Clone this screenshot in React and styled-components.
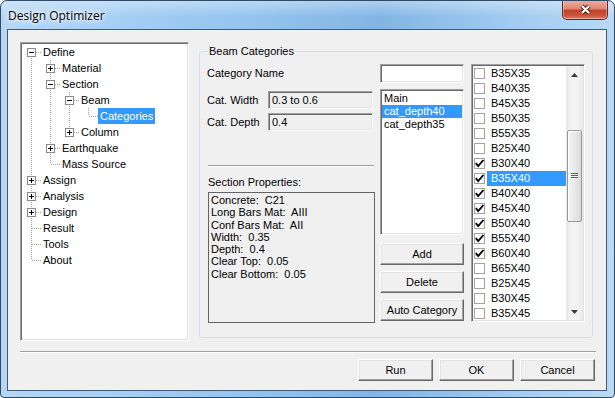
import React from "react";
import styled, { createGlobalStyle } from "styled-components";

const GlobalStyle = createGlobalStyle`
  html, body { margin: 0; padding: 0; background: #fff; }
  body {
    font-family: "Liberation Sans", Arial, sans-serif;
    font-size: 11px;
    color: #000;
  }
  #root { width: 615px; height: 398px; }
`;

const Window = styled.div`
  box-sizing: border-box;
  width: 615px;
  height: 398px;
  border: 1px solid #2f4a66;
  border-radius: 7px 7px 4px 4px;
  background:
    linear-gradient(180deg, rgba(255,255,255,0.35) 0%, rgba(255,255,255,0) 16px),
    linear-gradient(90deg, #b6d6f3 0%, #a6cff3 18%, #94c4ef 40%, #83b5e4 62%, #9cc8ef 80%, #bad9f4 100%);
  display: flex;
  flex-direction: column;
  overflow: hidden;
`;

const TitleBar = styled.div`
  height: 28px;
  flex: none;
  display: flex;
  align-items: flex-start;
  padding: 0 6px 0 7px;
`;

const Title = styled.div`
  flex: 1;
  margin-top: 7px;
  font-family: "Open Sans", "Noto Sans", sans-serif;
  font-size: 12px;
  line-height: 16px;
  color: #000;
  text-shadow: 0 0 6px #fff, 0 0 10px #fff, 0 0 3px rgba(255,255,255,0.9);
`;

const CloseButton = styled.div`
  box-sizing: border-box;
  width: 46px;
  height: 20px;
  margin-top: -1px;
  border: 1px solid #6b2a20;
  border-top: none;
  border-radius: 0 0 5px 5px;
  background: linear-gradient(180deg, #eab0a4 0%, #dc8877 45%, #c2432c 55%, #c9503a 80%, #df7f69 100%);
  box-shadow: inset 0 0 0 1px rgba(255,255,255,0.35);
  display: flex;
  align-items: center;
  justify-content: center;
`;

const Client = styled.div`
  flex: 1;
  margin: 0 7px 6px 6px;
  border: 1px solid #3b5d80;
  background: #f0f0f0;
  display: flex;
  flex-direction: column;
  padding: 12px 10px 0 12px;
`;

const TopRow = styled.div`
  display: flex;
  align-items: flex-start;
  gap: 10px;
  height: 299px;
`;

const sunken = `
  box-sizing: border-box;
  border: 1px solid;
  border-color: #a0a0a0 #fff #fff #a0a0a0;
  box-shadow: inset 1px 1px 0 #696969, inset -1px -1px 0 #e3e3e3;
  padding: 1px;
`;

const TreePanel = styled.div`
  ${sunken}
  width: 169px;
  height: 299px;
  background: #fff;
`;

const TreeRow = styled.div`
  display: flex;
  height: 16px;
`;

const Guide = styled.svg`
  display: block;
  flex: none;
`;

const TreeLabel = styled.span`
  padding: 0 2px;
  height: 16px;
  line-height: 16px;
  white-space: nowrap;
  background: ${(p) => (p.$selected ? "#3399ff" : "transparent")};
  color: ${(p) => (p.$selected ? "#fff" : "#000")};
`;

const GroupBox = styled.div`
  position: relative;
  box-sizing: border-box;
  width: 394px;
  height: 287px;
  margin-top: 9px;
  border: 1px solid #d5dfe5;
  border-radius: 3px;
  padding: 12px 7px 0 7px;
  display: flex;
  gap: 5px;
`;

const Legend = styled.div`
  position: absolute;
  top: -7px;
  left: 8px;
  padding: 0 1px;
  line-height: 13px;
  background: #f0f0f0;
`;

const Column = styled.div`
  flex: none;
  width: ${(p) => p.$w}px;
  margin-left: ${(p) => p.$ml || 0}px;
  display: flex;
  flex-direction: column;
`;

const PlainLabel = styled.div`
  height: ${(p) => p.$h || 13}px;
  line-height: ${(p) => p.$h || 13}px;
  margin-top: ${(p) => p.$mt || 0}px;
  margin-left: ${(p) => p.$ml || 0}px;
`;

const FieldRow = styled.div`
  display: flex;
  align-items: center;
  margin-top: ${(p) => p.$mt}px;
`;

const FieldLabel = styled.div`
  width: 61px;
`;

const ReadOnlyBox = styled.div`
  ${sunken}
  width: 105px;
  height: 18px;
  padding: 0 0 0 3px;
  line-height: 16px;
  background: #f0f0f0;
`;

const Etched = styled.div`
  width: ${(p) => p.$w}px;
  margin-top: ${(p) => p.$mt}px;
  margin-left: ${(p) => p.$ml || 0}px;
  border-top: 1px solid #a0a0a0;
  border-bottom: 1px solid #fff;
`;

const PropsBox = styled.div`
  box-sizing: border-box;
  width: 167px;
  height: 131px;
  margin: 3px 0 0 1px;
  border: 1px solid #646464;
  padding: 1px 2px;
  line-height: 12.3px;
  white-space: pre;
`;

const TextInput = styled.div`
  ${sunken}
  width: 84px;
  height: 19px;
  background: #fff;
`;

const ListBox = styled.div`
  ${sunken}
  width: 84px;
  height: 146px;
  margin-top: 6px;
  padding: 2px 1px 1px 1px;
  background: #fff;
`;

const ListItem = styled.div`
  height: 13px;
  line-height: 13px;
  padding-left: 2px;
  white-space: nowrap;
  background: ${(p) => (p.$selected ? "#3399ff" : "transparent")};
  color: ${(p) => (p.$selected ? "#fff" : "#000")};
`;

const Button = styled.div`
  box-sizing: border-box;
  width: ${(p) => p.$w || 84}px;
  height: 22px;
  margin-top: ${(p) => p.$mt || 0}px;
  border: 1px solid;
  border-color: #fff #696969 #696969 #fff;
  box-shadow: inset -1px -1px 0 #a0a0a0, inset 1px 1px 0 #e3e3e3;
  background: #f0f0f0;
  display: flex;
  align-items: center;
  justify-content: center;
  line-height: 13px;
`;

const CheckedList = styled.div`
  ${sunken}
  width: 114px;
  height: 258px;
  background: #fff;
  display: flex;
  overflow: hidden;
`;

const CheckItems = styled.div`
  flex: 1;
  overflow: hidden;
`;

const CheckRow = styled.div`
  height: 15px;
  display: flex;
  align-items: center;
`;

const CheckBoxIcon = styled.svg`
  display: block;
  flex: none;
  margin-left: 1px;
`;

const CheckLabel = styled.div`
  flex: 1;
  margin-left: 2px;
  padding-left: 4px;
  height: 15px;
  line-height: 15px;
  background: ${(p) => (p.$selected ? "#3399ff" : "transparent")};
  color: ${(p) => (p.$selected ? "#fff" : "#000")};
`;

const ScrollBar = styled.div`
  width: 17px;
  flex: none;
  display: flex;
  flex-direction: column;
  background: linear-gradient(90deg, #e6e6e6 0%, #f3f3f3 30%, #f3f3f3 70%, #e8e8e8 100%);
`;

const ArrowBtn = styled.div`
  height: 17px;
  flex: none;
  display: flex;
  align-items: center;
  justify-content: center;
`;

const Track = styled.div`
  flex: 1;
  display: flex;
  flex-direction: column;
`;

const Thumb = styled.div`
  box-sizing: border-box;
  height: ${(p) => p.$h}px;
  margin: ${(p) => p.$top}px 1px 0 1px;
  border: 1px solid #979797;
  border-radius: 2px;
  background: linear-gradient(90deg, #f4f4f4 0%, #e9e9e9 50%, #d9d9d9 100%);
  box-shadow: inset 1px 1px 0 #fff;
  display: flex;
  align-items: center;
  justify-content: center;
`;

const Grip = styled.div`
  width: 7px;
  height: 6px;
  margin-top: -1px;
  background: repeating-linear-gradient(180deg, #5e5e5e 0, #5e5e5e 1px, #f6f6f6 1px, #f6f6f6 2px);
`;

const BottomRule = styled.div`
  margin-top: 10px;
  border-top: 1px solid #a0a0a0;
  border-bottom: 1px solid #fff;
`;

const ButtonRow = styled.div`
  display: flex;
  justify-content: flex-end;
  gap: 6px;
  margin-top: 6px;
  padding-right: 1px;
`;

const treeData = [
  {
    label: "Define",
    open: true,
    children: [
      { label: "Material", children: [{ label: "x" }] },
      {
        label: "Section",
        open: true,
        children: [
          { label: "Beam", open: true, children: [{ label: "Categories", selected: true }] },
          { label: "Column", children: [{ label: "x" }] },
        ],
      },
      { label: "Earthquake", children: [{ label: "x" }] },
      { label: "Mass Source" },
    ],
  },
  { label: "Assign", children: [{ label: "x" }] },
  { label: "Analysis", children: [{ label: "x" }] },
  { label: "Design", children: [{ label: "x" }] },
  { label: "Result" },
  { label: "Tools" },
  { label: "About" },
];

function flatten(nodes, level, ancestors, out) {
  nodes.forEach((n, i) => {
    const last = i === nodes.length - 1;
    out.push({ ...n, level, last, first: level === 0 && i === 0, ancestors });
    if (n.children && n.open) flatten(n.children, level + 1, [...ancestors, !last], out);
  });
  return out;
}

const dot = { stroke: "#a0a0a0", strokeWidth: 1, strokeDasharray: "1 1" };

function GuideCell({ through, node }) {
  return (
    <Guide width="19" height="16" viewBox="0 0 19 16">
      {through && <line x1="9.5" y1="0" x2="9.5" y2="16" {...dot} />}
      {node && (
        <>
          {!node.first && <line x1="9.5" y1="0" x2="9.5" y2="8" {...dot} />}
          {!node.last && <line x1="9.5" y1="8" x2="9.5" y2="16" {...dot} />}
          <line x1="10" y1="8.5" x2="19" y2="8.5" {...dot} />
          {node.children && (
            <>
              <rect x="5.5" y="4.5" width="8" height="8" fill="#fff" stroke="#8a8a8a" />
              <line x1="7" y1="8.5" x2="12" y2="8.5" stroke="#000" />
              {!node.open && <line x1="9.5" y1="6" x2="9.5" y2="11" stroke="#000" />}
            </>
          )}
        </>
      )}
    </Guide>
  );
}

function Tree() {
  const rows = flatten(treeData, 0, [], []);
  return (
    <TreePanel>
      {rows.map((r, i) => (
        <TreeRow key={i}>
          {r.ancestors.map((a, c) => (
            <GuideCell key={c} through={a} />
          ))}
          <GuideCell node={r} />
          <TreeLabel $selected={r.selected}>{r.label}</TreeLabel>
        </TreeRow>
      ))}
    </TreePanel>
  );
}

function CheckBox({ checked }) {
  return (
    <CheckBoxIcon width="11" height="11" viewBox="0 0 11 11">
      <rect x="0.5" y="0.5" width="10" height="10" fill="#fff" stroke="#a3a3a3" />
      {checked && (
        <path d="M1.8 5.2 L4.2 8 L9.4 2" fill="none" stroke="#000" strokeWidth="1.9" />
      )}
    </CheckBoxIcon>
  );
}

const sections = [
  { name: "B35X35", on: false },
  { name: "B40X35", on: false },
  { name: "B45X35", on: false },
  { name: "B50X35", on: false },
  { name: "B55X35", on: false },
  { name: "B25X40", on: false },
  { name: "B30X40", on: true },
  { name: "B35X40", on: true, selected: true },
  { name: "B40X40", on: true },
  { name: "B45X40", on: true },
  { name: "B50X40", on: true },
  { name: "B55X40", on: true },
  { name: "B60X40", on: true },
  { name: "B65X40", on: false },
  { name: "B25X45", on: false },
  { name: "B30X45", on: false },
  { name: "B35X45", on: false },
];

const props = [
  "Concrete:  C21",
  "Long Bars Mat:  AIII",
  "Conf Bars Mat:  AII",
  "Width:  0.35",
  "Depth:  0.4",
  "Clear Top:  0.05",
  "Clear Bottom:  0.05",
];

export default function App() {
  return (
    <>
      <GlobalStyle />
      <Window>
        <TitleBar>
          <Title>Design Optimizer</Title>
          <CloseButton>
            <svg width="13" height="11" viewBox="0 0 13 11">
              <path d="M3 2 L10 9 M10 2 L3 9" stroke="#4a140d" strokeWidth="4" />
              <path d="M3 2 L10 9 M10 2 L3 9" stroke="#fff" strokeWidth="2.2" />
            </svg>
          </CloseButton>
        </TitleBar>
        <Client>
          <TopRow>
            <Tree />
            <GroupBox>
              <Legend>Beam Categories</Legend>
              <Column $w={168}>
                <PlainLabel $h={19}>Category Name</PlainLabel>
                <FieldRow $mt={8}>
                  <FieldLabel>Cat. Width</FieldLabel>
                  <ReadOnlyBox>0.3 to 0.6</ReadOnlyBox>
                </FieldRow>
                <FieldRow $mt={4}>
                  <FieldLabel>Cat. Depth</FieldLabel>
                  <ReadOnlyBox>0.4</ReadOnlyBox>
                </FieldRow>
                <Etched $w={166} $mt={34} $ml={1} />
                <PlainLabel $mt={9} $ml={1}>Section Properties:</PlainLabel>
                <PropsBox>
                  {props.map((p) => (
                    <div key={p}>{p}</div>
                  ))}
                </PropsBox>
              </Column>
              <Column $w={84}>
                <TextInput />
                <ListBox>
                  <ListItem>Main</ListItem>
                  <ListItem $selected>cat_depth40</ListItem>
                  <ListItem>cat_depth35</ListItem>
                </ListBox>
                <Button $mt={8}>Add</Button>
                <Button $mt={6}>Delete</Button>
                <Button $mt={6}>Auto Category</Button>
              </Column>
              <Column $w={114} $ml={2}>
                <CheckedList>
                  <CheckItems>
                    {sections.map((s) => (
                      <CheckRow key={s.name}>
                        <CheckBox checked={s.on} />
                        <CheckLabel $selected={s.selected}>{s.name}</CheckLabel>
                      </CheckRow>
                    ))}
                  </CheckItems>
                  <ScrollBar>
                    <ArrowBtn>
                      <svg width="7" height="4" viewBox="0 0 7 4">
                        <path d="M0 4 L3.5 0 L7 4 Z" fill="#3c3c3c" />
                      </svg>
                    </ArrowBtn>
                    <Track>
                      <Thumb $top={47} $h={92}>
                        <Grip />
                      </Thumb>
                    </Track>
                    <ArrowBtn>
                      <svg width="7" height="4" viewBox="0 0 7 4">
                        <path d="M0 0 L7 0 L3.5 4 Z" fill="#3c3c3c" />
                      </svg>
                    </ArrowBtn>
                  </ScrollBar>
                </CheckedList>
              </Column>
            </GroupBox>
          </TopRow>
          <BottomRule />
          <ButtonRow>
            <Button $w={75}>Run</Button>
            <Button $w={75}>OK</Button>
            <Button $w={75}>Cancel</Button>
          </ButtonRow>
        </Client>
      </Window>
    </>
  );
}
